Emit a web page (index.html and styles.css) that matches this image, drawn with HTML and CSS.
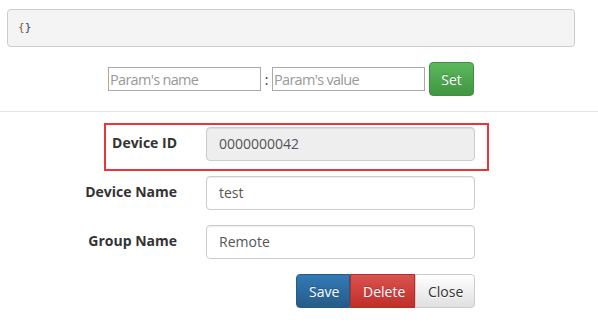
FILE: index.html
```html
<!DOCTYPE html>
<html lang="en">
<head>
    <meta charset="UTF-8">
    <meta name="viewport" content="width=device-width, initial-scale=1.0">
    <title>Device</title>
    <link rel="stylesheet" href="styles.css">
</head>
<body>

<!-- Params JSON -->
<div class="wrap">
    <pre class="params"><span class="brace-open">{</span><span class="brace-close">}</span></pre>

    <div class="param-row">
        <input type="text" class="param-input" placeholder="Param's name">
        <span class="colon">:</span>
        <input type="text" class="param-input" placeholder="Param's value">
        <button class="btn btn-set">Set</button>
    </div>
</div>

<hr class="divider">

<!-- Device form -->
<div class="device-form">
    <div class="form-row highlight">
        <label>Device ID</label>
        <input type="text" class="field" value="0000000042" readonly>
        <div class="marker"></div>
    </div>
    <div class="form-row">
        <label>Device Name</label>
        <input type="text" class="field" value="test">
    </div>
    <div class="form-row">
        <label>Group Name</label>
        <input type="text" class="field" value="Remote">
    </div>
    <div class="actions">
        <div class="btn-group">
            <button class="btn btn-save">Save</button>
            <button class="btn btn-delete">Delete</button>
            <button class="btn btn-close">Close</button>
        </div>
    </div>
</div>

</body>
</html>
```

FILE: styles.css
```css
body {
    margin: 0;
    font-family: "Open Sans", "DejaVu Sans", sans-serif;
    font-size: 14px;
    color: #333;
    background: #fff;
}
.wrap {
    margin-left: 7px;
    width: 568px;
    padding-top: 9px;
}
.params {
    margin: 0;
    height: 38px;
    box-sizing: border-box;
    padding: 0 10px;
    line-height: 36px;
    font-family: "DejaVu Sans Mono", monospace;
    font-size: 11px;
    background-color: #f4f4f4;
    border: 1px solid #ccc;
    border-radius: 4px;
}
.brace-open {
    color: #8a5a2b;
}
.brace-close {
    color: #3a3f6b;
}
.param-row {
    display: flex;
    align-items: center;
    justify-content: center;
    margin-top: 15px;
}
.param-input {
    width: 153px;
    height: 24px;
    box-sizing: border-box;
    border: 1px solid #a9a9a9;
    padding: 0 1px;
    font-family: "Open Sans", sans-serif;
    font-size: 14.5px;
    letter-spacing: -0.7px;
    color: #555;
}
.param-input::placeholder {
    color: #999;
}
.colon {
    width: 11px;
    text-align: center;
    color: #333;
    font-size: 14px;
}
.btn {
    height: 34px;
    box-sizing: border-box;
    font-family: "Open Sans", sans-serif;
    font-size: 14px;
    border: 1px solid transparent;
    cursor: pointer;
    padding: 0 12px;
    color: #fff;
    text-shadow: 0 -1px 0 rgba(0, 0, 0, 0.2);
}
.btn-set {
    width: 45px;
    margin-left: 4px;
    padding: 0;
    border-radius: 4px;
    border-color: #3e8f3e;
    background-image: linear-gradient(#5cb85c, #419641);
}
.divider {
    margin: 15px 0 0;
    border: 0;
    border-top: 1px solid #e5e5e5;
}
.device-form {
    margin-left: 57px;
    width: 418px;
    padding-top: 15px;
}
.form-row {
    position: relative;
    display: grid;
    grid-template-columns: 120px 269px;
    column-gap: 29px;
    align-items: center;
    margin-bottom: 15px;
}
.form-row label {
    text-align: right;
    font-weight: bold;
    color: #333;
    line-height: 18px;
    padding-bottom: 2px;
}
.field {
    height: 34px;
    box-sizing: border-box;
    padding: 0 12px 1px;
    border: 1px solid #ccc;
    border-radius: 4px;
    font-family: "Open Sans", sans-serif;
    font-size: 14px;
    color: #555;
    background: #fff;
    box-shadow: inset 0 1px 1px rgba(0, 0, 0, 0.075);
}
.field[readonly] {
    background-color: #eee;
}
.highlight .marker {
    position: absolute;
    left: 47px;
    top: -4px;
    width: 385px;
    height: 48px;
    box-sizing: border-box;
    border: 2px solid #ee3338;
    pointer-events: none;
}
.actions {
    display: flex;
    justify-content: flex-end;
}
.btn-group {
    display: flex;
}
.btn-save {
    width: 54px;
    border-radius: 4px 0 0 4px;
    border-color: #265a88;
    background-image: linear-gradient(#337ab7, #265a88);
}
.btn-delete {
    width: 65px;
    border-color: #b92c28;
    background-image: linear-gradient(#d9534f, #c12e2a);
}
.btn-close {
    width: 60px;
    color: #333;
    text-shadow: 0 1px 0 #fff;
    border-radius: 0 4px 4px 0;
    border-color: #ccc;
    background-image: linear-gradient(#fff, #e0e0e0);
}
```
